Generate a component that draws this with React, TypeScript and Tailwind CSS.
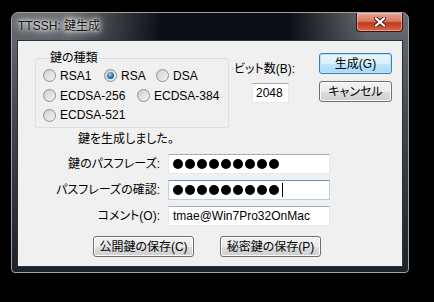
const ui = "font-['Liberation_Sans_Narrow','Liberation_Sans','Noto_Sans_CJK_JP',sans-serif] [font-feature-settings:'palt']";

function Radio({ label, checked, w }: { label: string; checked?: boolean; w: string }) {
  return (
    <div className={`flex items-center gap-[4px] ${w}`}>
      <span className="flex h-[13px] w-[13px] items-center justify-center rounded-full border border-[#8e8f8f] bg-[linear-gradient(135deg,#cfcfcf,#f4f4f4)]">
        {checked && (
          <span className="h-[7px] w-[7px] rounded-full bg-[radial-gradient(circle_at_40%_35%,#9fd4ff,#1f6fb7_55%,#0c4d8a)]" />
        )}
      </span>
      <span>{label}</span>
    </div>
  );
}

function Button({ children, primary, w }: { children: React.ReactNode; primary?: boolean; w: string }) {
  return (
    <div
      className={`flex h-[21px] ${w} items-center justify-center rounded-[3px] border ${
        primary
          ? "border-[#3c7fb1] shadow-[inset_0_0_0_1px_#b7e3f8] bg-[linear-gradient(#eaf6fd_0%,#d9f0fc_50%,#bee6fd_51%,#a7d9f5_100%)]"
          : "border-[#707070] shadow-[inset_0_0_0_1px_#fcfcfc] bg-[linear-gradient(#f2f2f2_0%,#ebebeb_50%,#dddddd_51%,#cfcfcf_100%)]"
      }`}
    >
      {children}
    </div>
  );
}

function Dots({ caret }: { caret?: boolean }) {
  return (
    <div className="flex items-center gap-[2px] pl-[4px]">
      {Array.from({ length: 9 }).map((_, i) => (
        <span key={i} className="h-[10px] w-[10px] rounded-full bg-black" />
      ))}
      {caret && <span className="ml-[1px] h-[14px] w-px bg-black" />}
    </div>
  );
}

export default function App() {
  return (
    <div className={`h-[302px] w-[434px] overflow-hidden bg-black pl-[11px] pt-[12px] text-[12px] leading-[14px] text-black ${ui}`}>
      <div className="flex h-[261px] w-[398px] flex-col rounded-t-[7px] rounded-b-[4px] border border-[#9ea3a7] bg-[linear-gradient(#6a6d71,#44484c_40%,#1c2126)] px-[5px] pb-[5px]">
        {/* title bar */}
        <div className="-mx-[5px] flex h-[27px] items-start bg-[linear-gradient(to_right,rgba(11,15,21,0)_0%,rgba(11,15,21,0)_14%,#0b0f15_38%,#0b0f15_70%,rgba(11,15,21,0)_90%)] rounded-t-[6px] px-[5px]">
          <span className="pl-[1px] pt-[6px] font-['Liberation_Sans','Noto_Sans_CJK_JP',sans-serif] text-[12px] text-[#111] [text-shadow:0_0_6px_#fff,0_0_3px_#fff,0_0_10px_#fff]">
            TTSSH: 鍵生成
          </span>
          <div className="ml-auto flex h-[19px] w-[47px] items-center justify-center rounded-b-[4px] border border-t-0 border-[#3b120c] bg-[linear-gradient(#e6a593_0%,#d57a62_45%,#c0391b_55%,#d8664a_100%)] shadow-[inset_0_0_0_1px_rgba(255,220,200,0.5)]">
            <svg width="12" height="10" viewBox="0 0 12 10">
              <path d="M2 1.5 L10 8.5 M10 1.5 L2 8.5" stroke="#4a1a10" strokeWidth="4" strokeLinecap="square" />
              <path d="M2 1.5 L10 8.5 M10 1.5 L2 8.5" stroke="#fff" strokeWidth="2.2" strokeLinecap="square" />
            </svg>
          </div>
        </div>

        {/* client area */}
        <div className="flex h-[227px] w-[386px] flex-col border border-[#2b3035] bg-[#f0f0f0] pl-[17px] pt-[10px]">
          <div className="flex">
            <fieldset className="h-[77px] w-[194px] rounded-[3px] border border-[#d5dfe5] pl-[7px]">
              <legend className="ml-[6px] px-[1px] leading-[14px]">鍵の種類</legend>
              <div className="flex flex-col">
                <div className="flex h-[21px] items-center">
                  <Radio label="RSA1" w="w-[61px]" />
                  <Radio label="RSA" checked w="w-[52px]" />
                  <Radio label="DSA" w="w-[50px]" />
                </div>
                <div className="flex h-[19px] items-center">
                  <Radio label="ECDSA-256" w="w-[94px]" />
                  <Radio label="ECDSA-384" w="w-[90px]" />
                </div>
                <div className="flex h-[20px] items-center">
                  <Radio label="ECDSA-521" w="w-[94px]" />
                </div>
              </div>
            </fieldset>

            <div className="flex w-[90px] flex-col pl-[5px] pt-[11px]">
              <span>ビット数(B):</span>
              <div className="ml-[18px] mt-[7px] flex h-[20px] w-[37px] items-center border border-[#e3e9ef] border-t-[#abadb3] bg-white pl-[3px]">
                2048
              </div>
            </div>

            <div className="flex flex-col gap-[7px] pt-[2px]">
              <Button primary w="w-[73px]">生成(G)</Button>
              <Button w="w-[73px]">キャンセル</Button>
            </div>
          </div>

          <div className="ml-[43px] mt-[4px]">鍵を生成しました。</div>

          <div className="mt-[8px] grid grid-cols-[125px_162px] gap-x-[8px] gap-y-[6px]">
            <span className="self-center text-right">鍵のパスフレーズ:</span>
            <div className="flex h-[20px] items-center border border-[#e3e9ef] border-t-[#abadb3] bg-white">
              <Dots />
            </div>
            <span className="self-center text-right">パスフレーズの確認:</span>
            <div className="flex h-[20px] items-center border border-[#b5cfe7] border-t-[#5c93bf] bg-white">
              <Dots caret />
            </div>
            <span className="self-center text-right">コメント(O):</span>
            <div className="flex h-[20px] items-center border border-[#e3e9ef] border-t-[#abadb3] bg-white pl-[4px]">
              tmae@Win7Pro32OnMac
            </div>
          </div>

          <div className="ml-[58px] mt-[10px] flex gap-[26px]">
            <Button w="w-[101px]">公開鍵の保存(C)</Button>
            <Button w="w-[101px]">秘密鍵の保存(P)</Button>
          </div>
        </div>
      </div>
    </div>
  );
}
